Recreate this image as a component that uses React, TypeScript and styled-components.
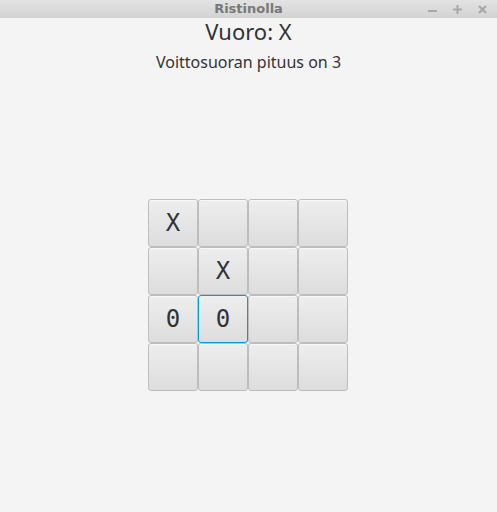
import React from "react";
import styled, { createGlobalStyle } from "styled-components";

const Global = createGlobalStyle`
  html, body { margin: 0; padding: 0; background: #f4f4f4; }
  body { width: 497px; height: 512px; overflow: hidden; }
`;

const Window = styled.div`
  width: 497px;
  height: 512px;
  display: flex;
  flex-direction: column;
  background: #f4f4f4;
`;

const TitleBar = styled.div`
  height: 18px;
  flex: none;
  position: relative;
  display: flex;
  align-items: center;
  justify-content: center;
  background: linear-gradient(#e3e3e3, #d3d3d3);
`;

const Title = styled.span`
  font-family: "DejaVu Sans", sans-serif;
  font-weight: bold;
  font-size: 13px;
  color: #787878;
  line-height: 18px;
`;

const Controls = styled.div`
  position: absolute;
  right: 9px;
  top: 0;
  height: 18px;
  display: flex;
  align-items: center;
  gap: 14px;
`;

const Body = styled.div`
  flex: 1;
  display: flex;
  flex-direction: column;
  align-items: center;
  font-family: "Noto Sans", "Open Sans", sans-serif;
  color: #333333;
`;

const Turn = styled.div`
  font-size: 22px;
  line-height: 26px;
`;

const Info = styled.div`
  font-size: 16px;
  line-height: 20px;
  margin-top: 8px;
`;

const Board = styled.div`
  margin-top: 127px;
  margin-left: -1px;
  display: grid;
  grid-template-columns: repeat(4, 50px);
  grid-auto-rows: 48px;
`;

const Cell = styled.div<{ $focused?: boolean }>`
  box-sizing: border-box;
  border: 1px solid ${(p) => (p.$focused ? "#039ed3" : "#bdbdbd")};
  border-radius: 3px;
  background: linear-gradient(#eeeeee, #dddddd);
  box-shadow: inset 0 1px 0 ${(p) => (p.$focused ? "#e8f4fa" : "#f8f8f8")};
  display: flex;
  align-items: center;
  justify-content: center;
  font-family: "DejaVu Sans Mono", monospace;
  font-size: 24px;
  color: #333333;
`;

const Ctrl = ({ kind }: { kind: "min" | "max" | "close" }) => (
  <svg width="11" height="11" viewBox="0 0 11 11">
    {kind === "min" && <rect x="1" y="6" width="9" height="2" fill="#a8a8a8" />}
    {kind === "max" && (
      <>
        <rect x="1" y="4.5" width="9" height="2" fill="#a8a8a8" />
        <rect x="4.5" y="1" width="2" height="9" fill="#a8a8a8" />
      </>
    )}
    {kind === "close" && (
      <path d="M2 2 L9 9 M9 2 L2 9" stroke="#a8a8a8" strokeWidth="2.2" />
    )}
  </svg>
);

const board = [
  ["X", "", "", ""],
  ["", "X", "", ""],
  ["0", "0", "", ""],
  ["", "", "", ""],
];

export default function App() {
  return (
    <>
      <Global />
      <Window>
        <TitleBar>
          <Title>Ristinolla</Title>
          <Controls>
            <Ctrl kind="min" />
            <Ctrl kind="max" />
            <Ctrl kind="close" />
          </Controls>
        </TitleBar>
        <Body>
          <Turn>Vuoro: X</Turn>
          <Info>Voittosuoran pituus on 3</Info>
          <Board>
            {board.map((row, r) =>
              row.map((v, c) => (
                <Cell key={`${r}-${c}`} $focused={r === 2 && c === 1}>
                  {v}
                </Cell>
              ))
            )}
          </Board>
        </Body>
      </Window>
    </>
  );
}
